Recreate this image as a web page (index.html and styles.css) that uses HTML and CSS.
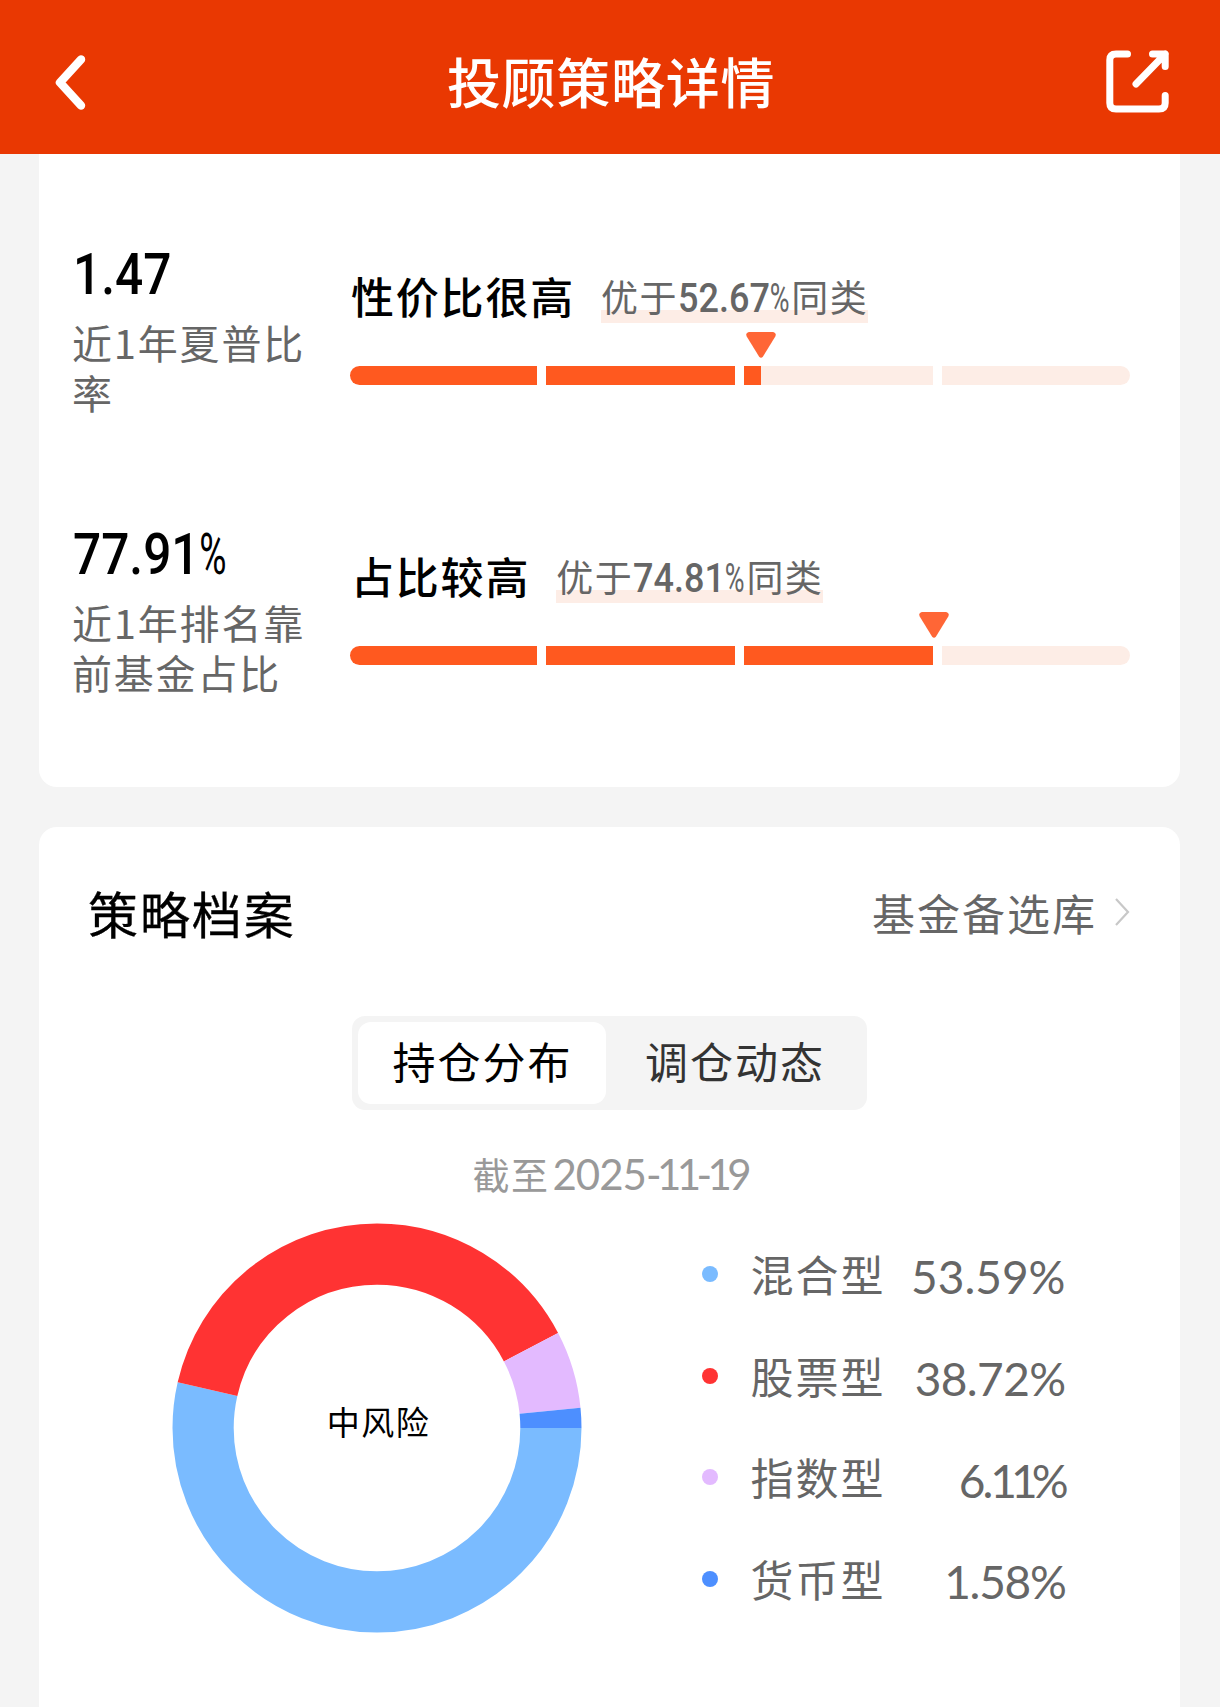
FILE: index.html
```html
<!DOCTYPE html>
<html lang="zh-CN">
<head>
<meta charset="utf-8">
<title>投顾策略详情</title>
<link rel="stylesheet" href="styles.css">
</head>
<body>
<header class="topbar">
  <svg class="icon-back" width="38" height="62" viewBox="0 0 38 62" fill="none" stroke="#fff" stroke-width="8.5" stroke-linecap="round" stroke-linejoin="round"><path d="M29 7.500 L8 30.500 L29 53.500"/></svg>
  <h1 class="topbar-title">投顾策略详情</h1>
  <svg class="icon-share" width="64" height="64" viewBox="0 0 64 64" fill="none" stroke="#fff" stroke-width="7" stroke-linecap="round" stroke-linejoin="round"><path d="M21.5 4H10Q3.800 4 3.800 10V53Q3.800 59 10 59H53Q59.200 59 59.200 53V45.500"/><path d="M46.500 4H59.200V16.500M59.200 4L30 34"/></svg>
</header>
<main class="page">
  <section class="card metrics">
    <div class="metric">
      <div class="metric-side">
        <div class="metric-number">1.47</div>
        <div class="metric-label">近1年夏普比率</div>
      </div>
      <div class="metric-main">
        <div class="metric-head">
          <strong class="metric-title">性价比很高</strong>
          <span class="tag">优于<span class="tag-number">52.67<i class="pct">%</i></span>同类</span>
        </div>
        <div class="bar">
          <span class="seg full"></span><span class="seg full"></span><span class="seg"><b style="width:17px"></b></span><span class="seg"></span>
          <svg class="marker" style="left:396px" width="30" height="26" viewBox="0 0 30 26"><path d="M2.800 0H27.200Q30.800 0.800 29.300 4.400L17 24.500Q15 27 13 24.500L0.700 4.400Q-0.800 0.800 2.800 0Z" fill="#ff6636"/></svg>
        </div>
      </div>
    </div>
    <div class="metric">
      <div class="metric-side">
        <div class="metric-number">77.91<i class="pct">%</i></div>
        <div class="metric-label">近1年排名靠前基金占比</div>
      </div>
      <div class="metric-main">
        <div class="metric-head">
          <strong class="metric-title">占比较高</strong>
          <span class="tag">优于<span class="tag-number">74.81<i class="pct">%</i></span>同类</span>
        </div>
        <div class="bar">
          <span class="seg full"></span><span class="seg full"></span><span class="seg full"></span><span class="seg"></span>
          <svg class="marker" style="left:569px" width="30" height="26" viewBox="0 0 30 26"><path d="M2.800 0H27.200Q30.800 0.800 29.300 4.400L17 24.500Q15 27 13 24.500L0.700 4.400Q-0.800 0.800 2.800 0Z" fill="#ff6636"/></svg>
        </div>
      </div>
    </div>
  </section>
  <section class="card archive">
    <div class="archive-head">
      <h2 class="archive-title">策略档案</h2>
      <a class="archive-link">基金备选库<svg width="16" height="30" viewBox="0 0 16 30" fill="none" stroke="#c8c8c8" stroke-width="2.200"><path d="M2 2L14 15L2 28"/></svg></a>
    </div>
    <div class="tabs">
      <span class="tab active">持仓分布</span>
      <span class="tab">调仓动态</span>
    </div>
    <div class="date">截至<span class="date-number">2025<span class="date-tight">-11-1</span>9</span></div>
    <div class="chart">
      <svg class="donut" width="410" height="410" viewBox="-205 -205 410 410">
        <g fill="none" stroke-width="61.200">
          <circle r="173.900" pathLength="100" stroke="#7abbff" stroke-dasharray="53.590 100"/>
          <circle r="173.900" pathLength="100" stroke="#ff3333" stroke-dasharray="38.720 100" stroke-dashoffset="-53.590"/>
          <circle r="173.900" pathLength="100" stroke="#e3baff" stroke-dasharray="6.110 100" stroke-dashoffset="-92.310"/>
          <circle r="173.900" pathLength="100" stroke="#4d8fff" stroke-dasharray="1.580 100" stroke-dashoffset="-98.420"/>
        </g>
        <text class="donut-text" x="1.500" y="7" text-anchor="middle">中风险</text>
      </svg>
      <ul class="legend">
        <li><i class="dot mixed"></i><span class="name">混合型</span><span class="value">53.59%</span></li>
        <li><i class="dot stock"></i><span class="name">股票型</span><span class="value snug">38.72%</span></li>
        <li><i class="dot index"></i><span class="name">指数型</span><span class="value tight">6.<span class="ones">11</span>%</span></li>
        <li><i class="dot money"></i><span class="name">货币型</span><span class="value narrow">1.58%</span></li>
      </ul>
    </div>
  </section>
</main>
</body>
</html>
```
FILE: styles.css
```css
* { box-sizing: border-box; margin: 0; padding: 0; }
html, body { height: 1707px; overflow: hidden; }
body { background: #f4f4f4; color: #000; font-family: "Noto Sans CJK SC", sans-serif; }
i { font-style: normal; }

.topbar { height: 154px; background: #e93802; color: #fff; display: flex; align-items: center; justify-content: space-between; padding: 0 50px 0 52px; }
.icon-back { margin: 12px 26px 0 0; }
.icon-share { margin-top: 10px; }
.topbar-title { font-size: 54px; font-weight: 500; letter-spacing: .7px; line-height: 80px; margin-top: 7px; }

.page { padding: 0 40px 0 39px; }
.card { background: #fff; border-radius: 18px; }
.metrics { height: 633px; border-radius: 0 0 18px 18px; padding: 84px 50px 0 33px; display: flex; flex-direction: column; gap: 120px; }
.metric { height: 160px; display: grid; grid-template-columns: 278px 780px; }
.metric-side { padding-top: 1px; }
.metric-number { font: 500 57px/72px Roboto, sans-serif; width: max-content; transform: scaleX(.87); transform-origin: left; margin: 0 0 6px 1px; }
.metric-label { width: 250px; font-size: 40px; line-height: 50px; letter-spacing: 1.8px; color: #666; }
.metric-main { padding-top: 26px; }
.metric-head { display: flex; align-items: flex-start; gap: 26px; height: 60px; margin-bottom: 42px; padding-left: 1px; }
.metric-title { font-size: 43px; line-height: 62px; letter-spacing: 1.8px; font-weight: 500; }
.tag { font-size: 37px; line-height: 62px; margin-top: 1px; height: 58px; letter-spacing: 1.5px; color: #666; background: linear-gradient(#fdede6, #fdede6) bottom / 100% 13px no-repeat; white-space: nowrap; }
.tag-number { display: inline-block; font: 500 40px/1 Roboto, sans-serif; letter-spacing: 0; transform: scaleX(.9); transform-origin: left; margin-right: -11px; }
.pct { font-weight: 400; display: inline-block; transform: scaleX(.75); transform-origin: left; margin-right: -.18em; }
.bar { position: relative; display: grid; grid-template-columns: 187px 189px 189px 188px; gap: 9px; height: 19px; }
.seg { background: #fdede6; overflow: hidden; }
.seg b { display: block; height: 100%; background: #ff591f; }
.seg.full { background: #ff591f; }
.seg:first-child { border-radius: 10px 0 0 10px; }
.seg:nth-child(4) { border-radius: 0 10px 10px 0; }
.marker { position: absolute; top: -34px; }

.archive { margin-top: 40px; height: 900px; padding: 43px 50px 0 49px; }
.archive-head { display: flex; justify-content: space-between; align-items: center; height: 80px; padding-top: 4px; }
.archive-title { font-size: 50px; font-weight: 400; -webkit-text-stroke: .3px #000; line-height: 80px; letter-spacing: 1.9px; }
.archive-link { display: flex; align-items: center; gap: 17px; font-size: 43px; line-height: 80px; letter-spacing: 2px; color: #666; }
.tabs { display: flex; width: 515px; height: 94px; margin: 66px auto 0; padding: 6px; background: #f4f4f4; border-radius: 13px; }
.tab { flex: none; width: 255px; height: 82px; line-height: 76px; padding-left: 4px; text-align: center; font-size: 43px; letter-spacing: 2px; color: #333; }
.tab.active { width: 248px; padding-left: 2px; background: #fff; border-radius: 13px; color: #000; }
.date { margin-top: 38px; height: 50px; line-height: 53px; text-align: center; font-size: 37px; letter-spacing: 1.5px; color: #999; padding-left: 5px; }
.date-number { font: 400 42px/1 Lato, sans-serif; letter-spacing: -1px; margin-left: 3px; }
.date-tight { letter-spacing: -4.6px; }
.chart { display: flex; gap: 120px; margin: 25px 0 0 83.500px; }
.donut { flex: none; }
.donut-text { font-size: 33px; letter-spacing: 1.500px; }
.legend { list-style: none; width: 364px; }
.legend li { display: flex; align-items: center; height: 101.700px; }
.dot { width: 16px; height: 16px; border-radius: 50%; margin-right: 33px; }
.mixed { background: #7abbff; }
.stock { background: #ff3333; }
.index { background: #e3baff; }
.money { background: #4d8fff; }
.name { font-size: 43px; line-height: 60px; letter-spacing: 2px; color: #666; padding-bottom: 2px; }
.value { margin-left: auto; font: 400 46px/60px Lato, sans-serif; color: #666; padding-top: 7px; }
.snug { letter-spacing: -.6px; }
.narrow { letter-spacing: -1.3px; }
.tight { letter-spacing: -3px; }
.ones { letter-spacing: -6px; }
```
